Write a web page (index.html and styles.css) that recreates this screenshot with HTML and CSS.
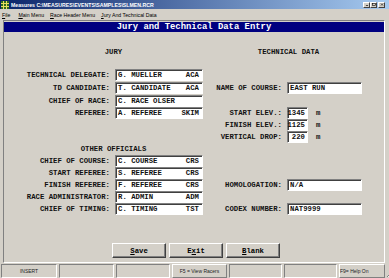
FILE: index.html
```html
<!DOCTYPE html>
<html lang="en">
<head>
    <meta charset="UTF-8">
    <title>Measures - Jury and Technical Data Entry</title>
    <link rel="stylesheet" href="styles.css">
</head>
<body>
    <div class="window">
        <div class="titlebar">
            <svg class="app-icon" viewBox="0 0 8 8">
                <rect x="0" y="0" width="8" height="8" fill="#2f6b1f"/>
                <path d="M0 2.5h8M0 5.5h8M2.5 0v8M5.5 0v8" stroke="#e8e060" stroke-width="1"/>
            </svg>
            <span class="title">Measures C:\MEASURES\EVENTS\SAMPLES\SLMEN.RCR</span>
            <div class="win-btns">
                <span class="win-btn"><svg viewBox="0 0 5 4"><path d="M1 3.5h3" stroke="#000"/></svg></span>
                <span class="win-btn"><svg viewBox="0 0 5 4"><rect x="0.5" y="0.5" width="4" height="3" fill="none" stroke="#000" stroke-width="0.8"/></svg></span>
                <span class="win-btn close"><svg viewBox="0 0 5 4"><path d="M1 0.5l3 3M4 0.5l-3 3" stroke="#000" stroke-width="0.8"/></svg></span>
            </div>
        </div>
        <div class="menubar">
            <span class="menu-item"><u>F</u>ile</span>
            <span class="menu-item"><u>M</u>ain Menu</span>
            <span class="menu-item"><u>R</u>ace Header Menu</span>
            <span class="menu-item"><u>J</u>ury And Technical Data</span>
        </div>

        <div class="frame">
            <div class="header">Jury and Technical Data Entry</div>

            <div class="form">
                <div class="heading jury">JURY</div>
                <div class="heading tech">TECHNICAL DATA</div>

                <div class="label">TECHNICAL DELEGATE:</div>
                <div class="field"><span>G. MUELLER</span><span>ACA</span></div>
                <div class="empty"></div>

                <div class="label">TD CANDIDATE:</div>
                <div class="field"><span>T. CANDIDATE</span><span>ACA</span></div>
                <div class="label">NAME OF COURSE:</div>
                <div class="value"><div class="field long"><span>EAST RUN</span></div></div>

                <div class="label">CHIEF OF RACE:</div>
                <div class="field"><span>C. RACE OLSER</span></div>
                <div class="empty"></div>

                <div class="label">REFEREE:</div>
                <div class="field"><span>A. REFEREE</span><span>SKIM</span></div>
                <div class="label">START ELEV.:</div>
                <div class="value"><div class="field short"><span>1345</span></div><span class="unit">m</span></div>

                <div class="empty"></div>
                <div class="label">FINISH ELEV.:</div>
                <div class="value"><div class="field short"><span>1125</span></div><span class="unit">m</span></div>

                <div class="empty"></div>
                <div class="label">VERTICAL DROP:</div>
                <div class="value"><div class="field short"><span>220</span></div><span class="unit">m</span></div>

                <div class="heading jury">OTHER OFFICIALS</div>
                <div class="empty"></div>

                <div class="label">CHIEF OF COURSE:</div>
                <div class="field"><span>C. COURSE</span><span>CRS</span></div>
                <div class="empty"></div>

                <div class="label">START REFEREE:</div>
                <div class="field"><span>S. REFEREE</span><span>CRS</span></div>
                <div class="empty"></div>

                <div class="label">FINISH REFEREE:</div>
                <div class="field"><span>F. REFEREE</span><span>CRS</span></div>
                <div class="label">HOMOLOGATION:</div>
                <div class="value"><div class="field long"><span>N/A</span></div></div>

                <div class="label">RACE ADMINISTRATOR:</div>
                <div class="field"><span>R. ADMIN</span><span>ADM</span></div>
                <div class="empty"></div>

                <div class="label">CHIEF OF TIMING:</div>
                <div class="field"><span>C. TIMING</span><span>TST</span></div>
                <div class="label">CODEX NUMBER:</div>
                <div class="value"><div class="field long"><span>NAT9999</span></div></div>
            </div>

            <div class="buttons">
                <button class="btn"><u>S</u>ave</button>
                <button class="btn">E<u>x</u>it</button>
                <button class="btn"><u>B</u>lank</button>
            </div>
        </div>

        <div class="statusbar">
            <div class="cell">INSERT</div>
            <div class="cell"></div>
            <div class="cell"></div>
            <div class="cell raised">F5 = View Racers</div>
            <div class="cell"></div>
            <div class="cell"></div>
            <div class="cell raised left">F9= Help On</div>
            <svg class="grip" viewBox="0 0 6 12">
                <path d="M6 5L0 11M6 8L3 11" stroke="#808080" stroke-width="1"/>
                <path d="M6 6L1 11M6 9L4 11" stroke="#fff" stroke-width="0.7"/>
            </svg>
        </div>
    </div>
</body>
</html>
```

FILE: styles.css
```css
* {
    box-sizing: border-box;
}
body {
    margin: 0;
    background-color: #d4d0c8;
    font-family: 'Liberation Sans', Arial, sans-serif;
}
.window {
    width: 389px;
    height: 278px;
    overflow: hidden;
    background-color: #d4d0c8;
}
.titlebar {
    height: 9px;
    display: flex;
    align-items: center;
    padding: 0 4px 0 1px;
    background: linear-gradient(to right, #0a246a, #a6caf0);
    color: #fff;
}
.app-icon {
    width: 8px;
    height: 8px;
    margin-right: 2px;
}
.title {
    flex: 1;
    font-size: 5.2px;
    font-weight: bold;
    white-space: nowrap;
}
.win-btns {
    display: flex;
    gap: 0;
}
.win-btn {
    width: 7px;
    height: 6px;
    display: flex;
    align-items: center;
    justify-content: center;
    background-color: #d4d0c8;
    border: 1px solid;
    border-color: #fff #404040 #404040 #fff;
}
.win-btn svg {
    width: 4px;
    height: 3px;
}
.win-btn.close {
    margin-left: 1px;
}
.menubar {
    height: 11px;
    display: flex;
    align-items: center;
    gap: 6px;
    padding-left: 2px;
    font-size: 5.2px;
    color: #000;
}
.menu-item:first-child {
    margin-right: 2px;
}
.frame {
    margin: 0 4px 0 3px;
    border: 1px solid;
    border-color: #808080 #fff #fff #808080;
    padding: 1px 0 4px;
}
.header {
    height: 10px;
    line-height: 10px;
    background-color: #000080;
    color: #fff;
    font-family: 'Liberation Mono', 'Courier New', monospace;
    font-size: 8.9px;
    font-weight: bold;
    text-align: center;
}
.form {
    margin-top: 14px;
    display: grid;
    grid-template-columns: 111px 88px 84px 1fr;
    grid-template-rows: 23px 13px 13px repeat(10, 12px);
    font-family: 'Liberation Mono', 'Courier New', monospace;
    font-size: 7.3px;
    font-weight: bold;
    color: #111;
}
.heading {
    grid-column: span 2;
    line-height: 12px;
    height: 12px;
    text-align: center;
}
.heading.jury {
    padding-left: 20px;
}
.heading.tech {
    padding-right: 10px;
}
.empty {
    grid-column: span 2;
}
.label {
    height: 12px;
    line-height: 12px;
    padding-right: 5px;
    text-align: right;
    white-space: nowrap;
}
.field {
    height: 12px;
    display: flex;
    align-items: center;
    justify-content: space-between;
    padding: 0 3px 0 2px;
    background-color: #fff;
    border: 1px solid;
    border-color: #808080 #fff #fff #808080;
    box-shadow: inset 1px 1px #404040;
    white-space: nowrap;
}
.value {
    display: flex;
    align-items: flex-start;
}
.field.long {
    width: 75px;
}
.field.short {
    width: 21px;
    justify-content: flex-end;
    padding-right: 2px;
}
.unit {
    margin-left: 8px;
    line-height: 12px;
}
.buttons {
    margin-top: 28px;
    padding-left: 4px;
    display: flex;
    justify-content: center;
    gap: 3px;
}
.btn {
    width: 54px;
    height: 15px;
    padding: 0;
    display: flex;
    align-items: center;
    justify-content: center;
    background-color: #d4d0c8;
    border: 1px solid;
    border-color: #fff #404040 #404040 #fff;
    box-shadow: inset -1px -1px #808080;
    font-family: 'Liberation Mono', 'Courier New', monospace;
    font-size: 7.3px;
    font-weight: bold;
    color: #000;
}
.statusbar {
    margin-top: 1px;
    height: 14px;
    display: grid;
    grid-template-columns: 56px 55px 54px 55px 53px 53px 46px 1fr;
    column-gap: 2px;
    padding-left: 1px;
    font-size: 5px;
    color: #222;
}
.cell {
    display: flex;
    align-items: center;
    justify-content: center;
    border: 1px solid;
    border-color: #808080 #fff #fff #808080;
    white-space: nowrap;
}
.cell.raised {
    border-color: #fff #808080 #808080 #fff;
}
.cell.left {
    justify-content: flex-start;
    padding-left: 0;
}
.grip {
    width: 6px;
    height: 12px;
    align-self: end;
}
```
